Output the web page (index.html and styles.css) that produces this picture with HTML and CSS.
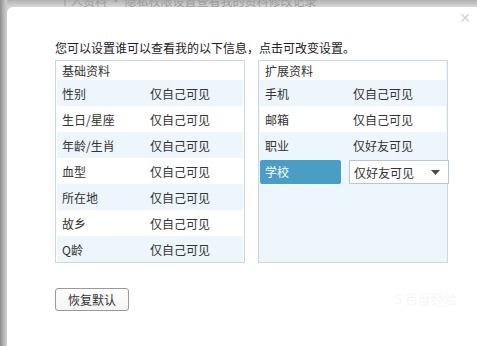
FILE: index.html
```html
<!DOCTYPE html>
<html lang="zh">
<head>
<meta charset="utf-8">
<link rel="stylesheet" href="styles.css">
</head>
<body>
<div class="topbar"><span class="ghost">个人资料 · 隐私权限设置查看我的资料修改记录</span></div>
<div class="dialog">
  <span class="close">✕</span>
  <p class="intro">您可以设置谁可以查看我的以下信息，点击可改变设置。</p>
  <div class="boxes">
    <div class="box">
      <div class="head">基础资料</div>
      <div class="row alt"><span class="k">性别</span><span class="v">仅自己可见</span></div>
      <div class="row"><span class="k">生日/星座</span><span class="v">仅自己可见</span></div>
      <div class="row alt"><span class="k">年龄/生肖</span><span class="v">仅自己可见</span></div>
      <div class="row"><span class="k">血型</span><span class="v">仅自己可见</span></div>
      <div class="row alt"><span class="k">所在地</span><span class="v">仅自己可见</span></div>
      <div class="row"><span class="k">故乡</span><span class="v">仅自己可见</span></div>
      <div class="row alt"><span class="k">Q龄</span><span class="v">仅自己可见</span></div>
    </div>
    <div class="box tinted">
      <div class="head">扩展资料</div>
      <div class="row alt"><span class="k">手机</span><span class="v">仅自己可见</span></div>
      <div class="row white"><span class="k">邮箱</span><span class="v">仅自己可见</span></div>
      <div class="row alt"><span class="k">职业</span><span class="v">仅好友可见</span></div>
      <div class="row sel">
        <span class="k active">学校</span>
        <span class="select">仅好友可见<svg class="caret" width="9" height="5" viewBox="0 0 9 5"><path d="M0 0h9L4.5 5z" fill="#4a4a4a"/></svg></span>
      </div>
    </div>
  </div>
  <button class="reset">恢复默认</button>
  <div class="wm">S 百度经验</div>
</div>
</body>
</html>
```
FILE: styles.css
```css
html, body { margin: 0; padding: 0; }
body {
  width: 477px;
  height: 346px;
  overflow: hidden;
  background: linear-gradient(to right, #8d8d8d 0, #b9b9b9 4px, #d0d0d0 7px);
  font-family: "Noto Sans CJK SC", "Microsoft YaHei", sans-serif;
  font-size: 12px;
  color: #333;
  position: relative;
}
.topbar {
  height: 7px;
  margin-left: 7px;
  background: linear-gradient(to bottom, #b0b0b0, #d8d8d8);
  overflow: hidden;
  position: relative;
}
.ghost {
  position: absolute;
  left: 52px;
  top: -8px;
  font-size: 12px;
  color: #9c9c9c;
  white-space: nowrap;
}
.dialog {
  position: relative;
  margin-left: 7px;
  height: 339px;
  background: #fff;
  border-top-left-radius: 6px;
  padding: 33px 0 0 48px;
  box-sizing: border-box;
}
.close {
  position: absolute;
  right: 6px;
  top: 3px;
  color: #d2d2d2;
  font-size: 14px;
  font-family: "DejaVu Sans", sans-serif;
}
.intro {
  margin: 0 0 5px 0;
  line-height: 15px;
  font-size: 12px;
  color: #222;
}
.boxes {
  display: flex;
  gap: 13px;
}
.box {
  width: 190px;
  height: 203px;
  box-sizing: border-box;
  border: 1px solid #c9d8e2;
  background: #fff;
  padding: 0 1px;
}
.box.tinted {
  background: #ecf6fc;
}
.head {
  height: 19px;
  line-height: 19px;
  padding-left: 5px;
  background: #fff;
}
.row {
  display: flex;
  align-items: center;
  height: 26px;
}
.row.alt { background: #ecf6fc; }
.row.white { background: #fff; }
.row .k {
  width: 93px;
  padding-left: 5px;
  box-sizing: border-box;
}
.row.sel {
  background: transparent;
  height: 26px;
  align-items: flex-start;
  padding-top: 2px;
  box-sizing: border-box;
}
.k.active {
  width: 81px;
  height: 24px;
  line-height: 24px;
  background: #4a9ec6;
  color: #fff;
  border-radius: 2px;
  padding-left: 5px;
}
.select {
  margin-left: 8px;
  width: 100px;
  height: 24px;
  box-sizing: border-box;
  border: 1px solid #b9c6ce;
  background: #fff;
  display: flex;
  align-items: center;
  justify-content: space-between;
  padding: 0 8px 0 4px;
  margin-right: -4px;
}
.reset {
  margin-top: 25px;
  width: 74px;
  height: 23px;
  border: 1px solid #9a9a9a;
  border-radius: 3px;
  background: linear-gradient(#fff, #f4f4f4);
  font-family: "Noto Sans CJK SC", sans-serif;
  font-size: 12px;
  color: #333;
  padding: 0;
}
.wm {
  position: absolute;
  right: 20px;
  top: 282px;
  color: #f6f6f6;
  font-size: 13px;
}
```
